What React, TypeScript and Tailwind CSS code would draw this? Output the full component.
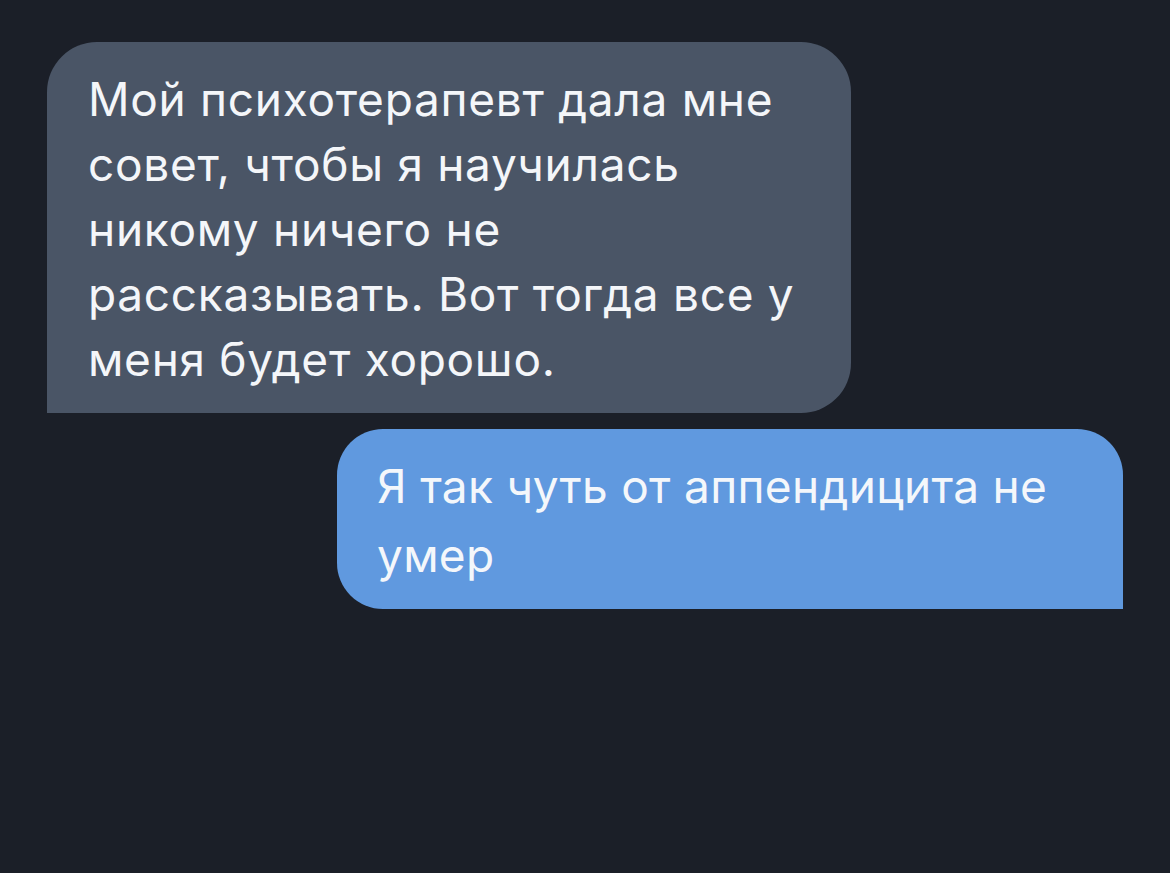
export default function App() {
  const font = { fontFamily: '"Inter", "Noto Sans", sans-serif' };
  return (
    <div className="min-h-screen w-full bg-[#1b1f28] pt-[42px] pl-[47px] pr-[47px]" style={font}>
      <div className="flex flex-col gap-[16px]">
        <div className="w-[804px] h-[371px] bg-[#4a5566] rounded-[50px] rounded-bl-none pl-[41px] pt-[25px] text-[46px] leading-[65px] text-[#f4f6f9] tracking-[0.7px]">
          Мой психотерапевт дала мне
          <br />
          совет, чтобы я научилась
          <br />
          никому ничего не
          <br />
          рассказывать. Вот тогда все у
          <br />
          меня будет хорошо.
        </div>
        <div className="ml-[290px] w-[786px] h-[180px] bg-[#6099df] rounded-[46px] rounded-br-none pl-[40px] pt-[23px] text-[46px] leading-[69px] text-[#f4f7fb] tracking-[0.3px]">
          Я так чуть от аппендицита не
          <br />
          умер
        </div>
      </div>
    </div>
  );
}
